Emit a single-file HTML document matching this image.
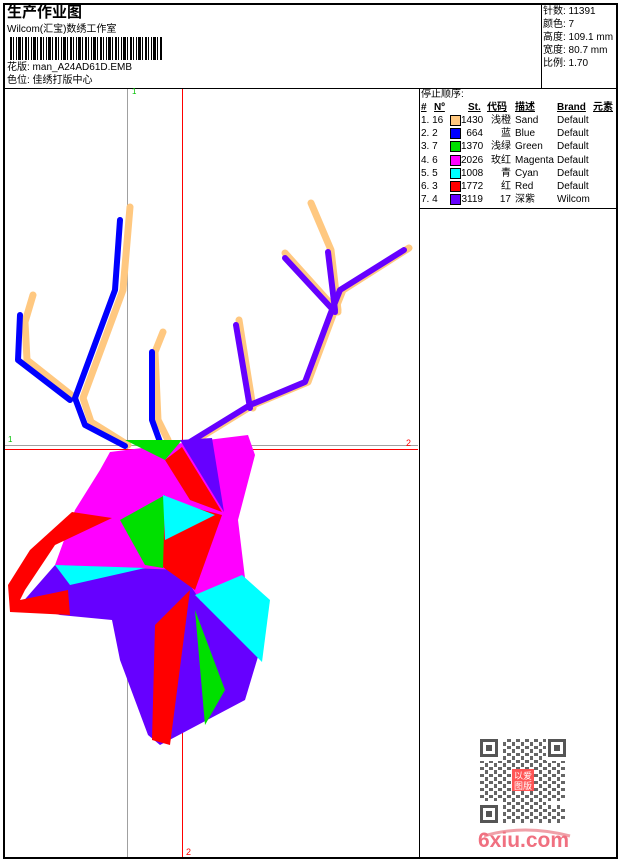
<!DOCTYPE html>
<html><head><meta charset="utf-8"><style>
body{margin:0;background:#fff;width:620px;height:860px;position:relative;overflow:hidden;font-family:"Liberation Sans","WenQuanYi Zen Hei","Noto Sans CJK SC",sans-serif;color:#000}
.a{position:absolute;white-space:nowrap}
.t{font-size:10px;line-height:13px}
.ln{position:absolute;background:#000}
</style></head><body>
<div class="ln" style="left:3px;top:3px;width:615px;height:2px"></div>
<div class="ln" style="left:3px;top:857px;width:615px;height:2px"></div>
<div class="ln" style="left:3px;top:3px;width:2px;height:856px"></div>
<div class="ln" style="left:616px;top:3px;width:2px;height:856px"></div>
<div class="ln" style="left:3px;top:88px;width:615px;height:1px"></div>
<div class="ln" style="left:541px;top:3px;width:1px;height:86px"></div>
<div class="ln" style="left:419px;top:88px;width:1px;height:770px"></div>
<div class="ln" style="left:419px;top:208px;width:199px;height:1px"></div>

<div class="a" style="left:7px;top:4px;font-size:15px;font-weight:bold;line-height:18px">生产作业图</div>
<div class="a t" style="left:7px;top:23px">Wilcom(汇宝)数绣工作室</div>
<div class="a" style="left:10px;top:37px;width:152px;height:23px;background:repeating-linear-gradient(90deg,#000 0 2px,#fff 2px 3px,#000 3px 4px,#fff 4px 6px,#000 6px 7px,#fff 7px 8px,#000 8px 11px,#fff 11px 12px,#000 12px 13px,#fff 13px 15px)"></div>
<div class="a t" style="left:7px;top:61px">花版: man_A24AD61D.EMB</div>
<div class="a t" style="left:7px;top:74px">色位: 佳绣打版中心</div>

<div class="a t" style="left:543px;top:5px">针数: 11391<br>颜色: 7<br>高度: 109.1 mm<br>宽度: 80.7 mm<br>比例: 1.70</div>

<div class="a t" style="left:421px;top:88px">停止顺序:</div>
<div class="a t" style="left:421px;top:101px;font-weight:bold;text-decoration:underline">#</div>
<div class="a t" style="left:434px;top:101px;font-weight:bold;text-decoration:underline">Nº</div>
<div class="a t" style="left:468px;top:101px;font-weight:bold;text-decoration:underline">St.</div>
<div class="a t" style="left:487px;top:101px;font-weight:bold;text-decoration:underline">代码</div>
<div class="a t" style="left:515px;top:101px;font-weight:bold;text-decoration:underline">描述</div>
<div class="a t" style="left:557px;top:101px;font-weight:bold;text-decoration:underline">Brand</div>
<div class="a t" style="left:593px;top:101px;font-weight:bold;text-decoration:underline">元素</div>
<div class="a t" style="left:421px;top:114px;line-height:13.2px">1. 16<br>2. 2<br>3. 7<br>4. 6<br>5. 5<br>6. 3<br>7. 4</div>
<div class="a t" style="left:450px;top:115px">
<div style="width:9px;height:9px;border:1px solid #000;background:#ffc880;margin-bottom:2.2px"></div>
<div style="width:9px;height:9px;border:1px solid #000;background:#0000ff;margin-bottom:2.2px"></div>
<div style="width:9px;height:9px;border:1px solid #000;background:#00e000;margin-bottom:2.2px"></div>
<div style="width:9px;height:9px;border:1px solid #000;background:#ff00ff;margin-bottom:2.2px"></div>
<div style="width:9px;height:9px;border:1px solid #000;background:#00ffff;margin-bottom:2.2px"></div>
<div style="width:9px;height:9px;border:1px solid #000;background:#ff0000;margin-bottom:2.2px"></div>
<div style="width:9px;height:9px;border:1px solid #000;background:#6600ff"></div></div>
<div class="a t" style="left:461px;top:114px;width:22px;text-align:right;line-height:13.2px">1430<br>664<br>1370<br>2026<br>1008<br>1772<br>3119</div>
<div class="a t" style="left:484px;top:114px;width:27px;text-align:right;line-height:13.2px">浅橙<br>蓝<br>浅绿<br>玫红<br>青<br>红<br>17</div>
<div class="a t" style="left:515px;top:114px;line-height:13.2px">Sand<br>Blue<br>Green<br>Magenta<br>Cyan<br>Red<br>深紫</div>
<div class="a t" style="left:557px;top:114px;line-height:13.2px">Default<br>Default<br>Default<br>Default<br>Default<br>Default<br>Wilcom</div>

<svg class="a" style="left:0;top:0" width="620" height="860">
<line x1="127.5" y1="89" x2="127.5" y2="857" stroke="#a0a0a0" stroke-width="1"/>
<line x1="182.5" y1="89" x2="182.5" y2="857" stroke="#f00" stroke-width="1"/>
<line x1="5" y1="445.5" x2="418" y2="445.5" stroke="#a0a0a0"/>
<line x1="5" y1="449.5" x2="418" y2="449.5" stroke="#f00"/>
<g fill="none" stroke-linecap="round" stroke-linejoin="round">
<g stroke="#ffc880" stroke-width="7" transform="translate(3,0)">
<polyline points="127,207 120,290 80,398 88,422 125,445"/>
<polyline points="30,295 22,322 24,360 72,398"/>
<polyline points="160,332 152,352 155,420 165,440"/>
<polyline points="185,445 250,405 305,382 330,315 340,290 406,248"/>
<polyline points="335,310 328,250 308,203"/>
<polyline points="335,312 282,253"/>
<polyline points="250,408 236,320"/>
</g>
<g stroke="#0000ff" stroke-width="6">
<polyline points="120,220 115,290 75,398 85,425 125,446"/>
<polyline points="20,315 18,360 70,400"/>
<polyline points="152,352 152,420 160,442"/>
</g>
<g stroke="#6600ff" stroke-width="6">
<polyline points="185,445 250,405 305,382 330,315 340,290 404,250"/>
<polyline points="335,310 328,252"/>
<polyline points="335,312 285,258"/>
<polyline points="250,408 236,325"/>
</g>
</g>
<polygon fill="#ff00ff" points="110,452 248,435 255,455 238,520 245,578 200,600 160,570 55,565 75,510 100,470"/>
<polygon fill="#6600ff" points="55,565 180,570 200,600 260,650 245,700 160,745 148,735 120,660 112,620 60,615 20,605"/>
<polygon fill="#ff0000" points="8,585 30,550 72,512 112,518 55,545 25,590 20,600 68,590 70,615 10,612"/>
<polygon fill="#00ffff" points="55,565 145,568 70,585"/>
<polygon fill="#ff0000" points="155,625 190,590 170,745 152,740"/>
<polygon fill="#00e000" points="195,610 225,690 205,725"/>
<polygon fill="#00ffff" points="195,595 242,575 270,600 262,662"/>
<polygon fill="#ff0000" points="160,540 165,500 222,515 195,590 160,565"/>
<polygon fill="#00e000" points="120,520 165,495 163,568 145,565"/>
<polygon fill="#00ffff" points="163,495 215,515 165,540"/>
<polygon fill="#ff0000" points="165,460 182,447 222,512 190,500"/>
<polygon fill="#00e000" points="125,440 182,440 165,460"/>
<polygon fill="#6600ff" points="180,440 212,438 224,512"/>
</svg>
<div class="a" style="left:132px;top:87px;font-size:8px;color:#00c000">1</div>
<div class="a" style="left:8px;top:435px;font-size:8px;color:#00c000">1</div>
<div class="a" style="left:406px;top:438px;font-size:9px;color:#f00">2</div>
<div class="a" style="left:186px;top:847px;font-size:9px;color:#f00">2</div>

<svg class="a" style="left:480px;top:739px" width="86" height="84">
<rect width="86" height="84" fill="#fff"/>
<defs><pattern id="p" width="9" height="7" patternUnits="userSpaceOnUse"><rect x="0" y="0" width="4" height="3" fill="#666"/><rect x="5" y="3" width="3" height="4" fill="#666"/></pattern></defs>
<rect x="22" y="0" width="44" height="84" fill="url(#p)"/>
<rect x="0" y="22" width="86" height="40" fill="url(#p)"/>
<rect x="22" y="66" width="64" height="18" fill="url(#p)"/>
<g fill="#555">
<rect x="0" y="0" width="18" height="18"/><rect x="68" y="0" width="18" height="18"/><rect x="0" y="66" width="18" height="18"/>
</g>
<g fill="#fff"><rect x="3" y="3" width="12" height="12"/><rect x="71" y="3" width="12" height="12"/><rect x="3" y="69" width="12" height="12"/></g>
<g fill="#555"><rect x="6" y="6" width="6" height="6"/><rect x="74" y="6" width="6" height="6"/><rect x="6" y="72" width="6" height="6"/></g>
<rect x="32" y="30" width="22" height="22" fill="#f55"/>
<text x="34" y="40" font-size="9" fill="#fff" font-family="WenQuanYi Zen Hei">以爱</text>
<text x="34" y="50" font-size="9" fill="#fff" font-family="WenQuanYi Zen Hei">图版</text>
</svg>
<svg class="a" style="left:474px;top:826px" width="104" height="30"><path d="M10 10 Q50 -2 96 10" stroke="#f0a0a8" stroke-width="3" fill="none"/></svg>
<div class="a" style="left:478px;top:829px;font-size:21px;font-weight:bold;color:#f07080;line-height:24px">6xiu.com</div>
</body></html>
